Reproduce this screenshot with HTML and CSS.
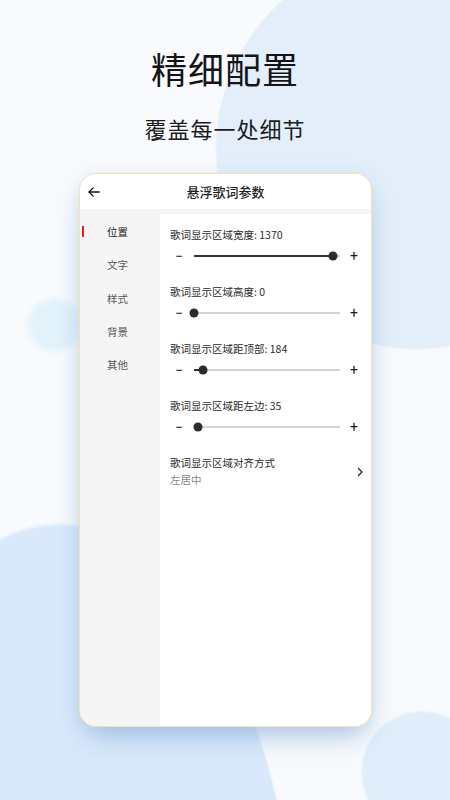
FILE: index.html
```html
<!DOCTYPE html>
<html lang="zh-CN">
<head>
    <meta charset="UTF-8">
    <title>精细配置</title>
    <link rel="stylesheet" href="styles.css">
</head>
<body>
    <div class="hero">
        <h1 class="hero-title">精细配置</h1>
        <p class="hero-sub">覆盖每一处细节</p>
    </div>

    <div class="card">
        <div class="card-header">
            <svg class="back" width="14" height="14" viewBox="0 0 24 24" fill="none" stroke="#111" stroke-width="2.2" stroke-linecap="round" stroke-linejoin="round">
                <path d="M21 12H3.5"/>
                <path d="M10.5 5l-7 7 7 7"/>
            </svg>
            <span class="card-title">悬浮歌词参数</span>
        </div>

        <div class="card-body">
            <ul class="side">
                <li class="side-item active">位置</li>
                <li class="side-item">文字</li>
                <li class="side-item">样式</li>
                <li class="side-item">背景</li>
                <li class="side-item">其他</li>
            </ul>

            <div class="panel">
                <div class="setting">
                    <div class="label">歌词显示区域宽度: 1370</div>
                    <div class="slider">
                        <span class="step">−</span>
                        <div class="track">
                            <div class="fill" style="width: 95.1%"></div>
                            <div class="thumb" style="left: 95.1%"></div>
                        </div>
                        <span class="step">+</span>
                    </div>
                </div>

                <div class="setting">
                    <div class="label">歌词显示区域高度: 0</div>
                    <div class="slider">
                        <span class="step">−</span>
                        <div class="track">
                            <div class="fill" style="width: 0%"></div>
                            <div class="thumb" style="left: 0%"></div>
                        </div>
                        <span class="step">+</span>
                    </div>
                </div>

                <div class="setting">
                    <div class="label">歌词显示区域距顶部: 184</div>
                    <div class="slider">
                        <span class="step">−</span>
                        <div class="track">
                            <div class="fill" style="width: 6.1%"></div>
                            <div class="thumb" style="left: 6.1%"></div>
                        </div>
                        <span class="step">+</span>
                    </div>
                </div>

                <div class="setting">
                    <div class="label">歌词显示区域距左边: 35</div>
                    <div class="slider">
                        <span class="step">−</span>
                        <div class="track">
                            <div class="fill" style="width: 2.6%"></div>
                            <div class="thumb" style="left: 2.6%"></div>
                        </div>
                        <span class="step">+</span>
                    </div>
                </div>

                <div class="option">
                    <div>
                        <div class="label">歌词显示区域对齐方式</div>
                        <div class="option-value">左居中</div>
                    </div>
                    <svg class="chevron" width="8" height="10" viewBox="0 0 8 10" fill="none" stroke="#222" stroke-width="1.3" stroke-linecap="round" stroke-linejoin="round">
                        <path d="M2.5 1.5L6 5 2.5 8.5"/>
                    </svg>
                </div>
            </div>
        </div>
    </div>
</body>
</html>
```

FILE: styles.css
```css
* {
    box-sizing: border-box;
}

html, body {
    height: 100%;
}

body {
    margin: 0;
    font-family: "Noto Sans CJK SC", "Noto Sans", sans-serif;
    color: #222;
    overflow: hidden;
    background-color: #f8fafd;
    background-image:
        radial-gradient(circle 31px at 55px 325px, #e2f2fb 70%, rgba(226, 242, 251, 0) 100%),
        radial-gradient(circle 62px at 422px 772px, #e0eefb 95%, rgba(224, 238, 251, 0) 100%),
        radial-gradient(ellipse 240px 478px at 60px 1000px, #d9e9fb 0%, #d9e9fb 99%, rgba(217, 233, 251, 0) 100%),
        radial-gradient(circle 201px at 416px 149px, #e3eefa 99%, rgba(227, 238, 250, 0) 100%);
}

.hero {
    padding-top: 44px;
    text-align: center;
}

.hero-title {
    margin: 0;
    font-size: 36px;
    line-height: 48px;
    font-weight: 400;
    letter-spacing: 1px;
    color: #141414;
}

.hero-sub {
    margin: 21px 0 0;
    font-size: 22px;
    line-height: 30px;
    letter-spacing: 1px;
    color: #1c1c1c;
}

.card {
    width: 293px;
    height: 554px;
    margin: 30px 0 0 79px;
    background: #f5f5f5;
    border: 1px solid #f2e3b1;
    border-radius: 17px;
    overflow: hidden;
    display: flex;
    flex-direction: column;
    box-shadow: 0 16px 28px -8px rgba(120, 160, 210, 0.55), 0 4px 18px rgba(160, 190, 225, 0.25);
}

.card-header {
    height: 35px;
    background: #fff;
    display: flex;
    align-items: center;
    justify-content: center;
    position: relative;
}

.back {
    position: absolute;
    left: 7px;
    top: 11px;
}

.card-title {
    font-size: 13px;
    font-weight: 500;
    color: #1e1e1e;
}

.card-body {
    flex: 1;
    display: flex;
}

.side {
    list-style: none;
    margin: 0;
    padding: 6px 5px 0 0;
    width: 80px;
}

.side-item {
    height: 33.3px;
    line-height: 33px;
    font-size: 10.5px;
    color: #555;
    text-align: center;
    position: relative;
}

.side-item.active {
    color: #222;
}

.side-item.active::before {
    content: "";
    position: absolute;
    left: 2px;
    top: 11px;
    width: 2px;
    height: 11px;
    background: #f01b1b;
}

.panel {
    flex: 1;
    margin-top: 5px;
    background: #fff;
    border-top-left-radius: 4px;
    padding: 14px 8px 0 10px;
}

.setting {
    margin-bottom: 19px;
}

.label {
    font-size: 10.5px;
    line-height: 14px;
    color: #2a2a2a;
}

.slider {
    display: flex;
    align-items: center;
    height: 20px;
    margin-top: 4px;
}

.step {
    width: 18px;
    text-align: center;
    font-family: Roboto, sans-serif;
    font-size: 14px;
    line-height: 20px;
    color: #1a1a1a;
}

.track {
    flex: 1;
    height: 1.5px;
    margin: 0 5px 0 6px;
    background: #d4d4d4;
    position: relative;
}

.fill {
    height: 100%;
    background: #333;
}

.thumb {
    position: absolute;
    top: 50%;
    width: 9px;
    height: 9px;
    border-radius: 50%;
    background: #2b2b2b;
    transform: translate(-50%, -50%);
}

.option {
    display: flex;
    align-items: center;
    justify-content: space-between;
}

.option-value {
    margin-top: 3px;
    font-size: 10.5px;
    line-height: 14px;
    color: #888;
}

.chevron {
    margin-right: -1px;
}
```
